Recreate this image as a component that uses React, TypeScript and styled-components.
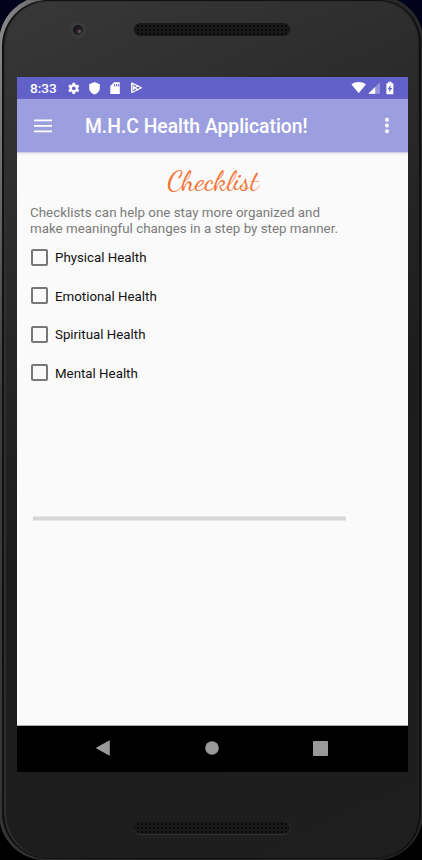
import React from "react";
import styled, { createGlobalStyle } from "styled-components";

const GlobalStyle = createGlobalStyle`
  * { box-sizing: border-box; }
  body { margin: 0; background: #000; font-family: Roboto, sans-serif; }
`;

const Scene = styled.div`
  width: 422px;
  height: 860px;
  overflow: hidden;
  display: flex;
  background: linear-gradient(#02031c 0, #01020f 60px, #000 400px);
`;

const Rim = styled.div`
  flex: none;
  width: 424px;
  height: 864px;
  margin: -4px -1px 0;
  padding: 4px 2px 1px 3px;
  border-radius: 47px 44px 47px 46px;
  background: linear-gradient(
    100deg,
    #929292 0,
    #777 24px,
    #3c3c3c 70px,
    #262626 300px,
    #2a2a2a 100%
  );
`;

const Body = styled.div`
  height: 859px;
  display: flex;
  flex-direction: column;
  align-items: center;
  border: 2px solid #101010;
  border-top-width: 1px;
  border-bottom-width: 1px;
  border-radius: 46px 42px 45px 46px;
  background: linear-gradient(155deg, #383838 0, #303030 140px, #232323 370px, #1c1c1c 510px, #1e1e1f 100%);
  box-shadow: inset 2px 0 1px #303030, inset -1px 0 1px #242424;
`;

const Forehead = styled.div`
  width: 391px;
  height: 76px;
  flex: none;
  margin-left: 2px;
  display: grid;
  grid-template-columns: 117px 156px 1fr;
  align-items: start;
`;

const Camera = styled.div`
  width: 16px;
  height: 16px;
  margin: 21px 0 0 53px;
  border-radius: 50%;
  border: 3px solid #3b3b3b;
  background: radial-gradient(circle at 65% 65%, #654b56 0 1px, #29252d 2px, #171719 5px);
`;

const Speaker = styled.div<{ $top: number }>`
  width: 156px;
  height: 13px;
  margin-top: ${(p) => p.$top}px;
  border-radius: 7px;
  background: radial-gradient(circle, #0a0a0a 0 0.8px, transparent 1.3px) 2px 1px / 4px 4px, #191919;
  box-shadow: 0 1px 0 #303030, 1px 0 0 #2c2c2c;
`;

const Screen = styled.main`
  width: 391px;
  height: 695px;
  flex: none;
  margin-left: 2px;
  overflow: hidden;
  display: flex;
  flex-direction: column;
  background: #fafafa;
`;

const StatusBar = styled.div`
  height: 22px;
  flex: none;
  display: flex;
  align-items: center;
  justify-content: space-between;
  padding: 0 13px;
  color: #fff;
  background: #6260c9;
`;

const StatusGroup = styled.div`
  display: flex;
  align-items: center;
  svg { display: block; }
`;

const Clock = styled.span`
  width: 36px;
  font-size: 13.6px;
  font-weight: 500;
  line-height: 22px;
`;

const AppBar = styled.header`
  height: 53px;
  flex: none;
  display: flex;
  align-items: center;
  padding: 0 17px;
  color: #fff;
  background: #9c9fdf;
  box-shadow: 0 1px 1px #d1d1df, 0 2px 3px #e8e8ec;
`;

const IconButton = styled.button`
  display: block;
  padding: 0;
  border: 0;
  color: #fff;
  background: none;
  svg { display: block; }
`;

const AppTitle = styled.h1`
  flex: 1;
  margin: 2px 0 0 33px;
  font-size: 19.3px;
  font-weight: 500;
  line-height: 24px;
  white-space: nowrap;
`;

const Content = styled.section`
  flex: 1;
  display: flex;
  flex-direction: column;
  align-items: flex-start;
  padding-left: 13px;
`;

const Heading = styled.h2`
  align-self: center;
  margin: 10px 0 0 -12px;
  height: 37px;
  color: #f47436;
  font-family: "Dancing Script", cursive;
  font-size: 28.8px;
  font-weight: 400;
  line-height: 39px;
`;

const Description = styled.p`
  margin: 6px 0 0;
  color: #7b7b7b;
  font-size: 13.36px;
  line-height: 16px;
  white-space: nowrap;
`;

const Options = styled.div`
  display: grid;
  grid-auto-rows: 38.5px;
  margin-top: 1px;
`;

const Option = styled.label`
  display: flex;
  align-items: center;
  gap: 7px;
  padding-left: 1px;
  color: #111;
  font-size: 13.3px;
  line-height: 18px;
`;

const OptionText = styled.span`
  padding-top: 2px;
`;

const Checkbox = styled.input`
  appearance: none;
  width: 17px;
  height: 17px;
  margin: 0;
  border: 2px solid #777;
  border-radius: 2px;
`;

const Progress = styled.div`
  width: 313px;
  height: 5px;
  margin: 124px 0 0 3px;
  border: solid #e8e8e8;
  border-width: 1px 0;
  background: #d6d6d6;
`;

const NavBar = styled.nav`
  height: 47px;
  flex: none;
  display: grid;
  grid-template-columns: 169px 49px 168px;
  align-items: center;
  justify-items: center;
  padding: 0 0 2px 1px;
  border-top: 1px solid #aaa;
  background: #000;
  svg { display: block; }
`;

const options = ["Physical Health", "Emotional Health", "Spiritual Health", "Mental Health"];

const StatusIcons = () => (
  <svg width="78" height="16" viewBox="0 0 78 16" fill="#fff">
    <g transform="translate(-.9 .3) scale(.67)">
      <path d="M19.14 12.94c.04-.3.06-.61.06-.94s-.02-.64-.07-.94l2.03-1.58-1.92-3.32-2.39.96a7 7 0 0 0-1.62-.94L14.87 3.6h-3.84l-.36 2.58c-.59.24-1.13.57-1.62.94l-2.39-.96-1.92 3.32 2.03 1.58a7.5 7.5 0 0 0 0 1.88l-2.03 1.58 1.92 3.32 2.39-.96c.5.38 1.03.7 1.62.94l.36 2.58h3.84l.36-2.58c.59-.24 1.13-.56 1.62-.94l2.39.96 1.92-3.32zM12.95 14.8a2.8 2.8 0 1 1 0-5.6 2.8 2.8 0 0 1 0 5.6z" />
    </g>
    <path d="M28.5 2.1 33.8 4.3v4c0 3-2 5-5.3 6.3-3.3-1.3-5.3-3.3-5.3-6.3v-4z" />
    <path fillRule="evenodd" d="M48 2.3h5.8v11.8h-9.5V6zm.1 1.7v2.5h1V4zm2 0v2.5h1V4zm2 0v2.5h1V4z" />
    <g transform="translate(0 1)">
      <path d="M65 1.4 69.6 6.8 65 12.2z" />
      <path
        d="M65.6 1.9 75.4 6.8l-9.8 4.9M69.2 6.8l3.1-2.4M69.2 6.8l3.1 2.4"
        fill="none"
        stroke="#fff"
        strokeWidth="1.2"
        strokeLinejoin="round"
      />
      <path d="M66.5 4v5.6" stroke="#8e8cd9" strokeWidth=".7" />
    </g>
  </svg>
);

const SignalIcons = () => (
  <svg width="44" height="16" viewBox="0 0 44 16" fill="#fff">
    <path d="M.5 4.4C4.7 1.2 10.6 1.2 14.8 4.4L7.7 13.2z" />
    <path d="M28.9 2.3v11.5H17.3z" opacity=".35" />
    <path d="M24.2 7v6.8h-6.9z" />
    <path fillRule="evenodd" d="M37.2 1.8h3.4v1.4h1.8v11h-7V3.2h1.8zM39.6 5.1l-3 4.1h1.9l-.3 3.1 3-4.2h-1.9z" />
  </svg>
);

export default function App() {
  return (
    <>
      <GlobalStyle />
      <Scene>
        <Rim>
          <Body>
            <Forehead>
              <Camera />
              <Speaker $top={22} />
            </Forehead>
            <Screen>
              <StatusBar>
                <StatusGroup>
                  <Clock>8:33</Clock>
                  <StatusIcons />
                </StatusGroup>
                <StatusGroup>
                  <SignalIcons />
                </StatusGroup>
              </StatusBar>
              <AppBar>
                <IconButton aria-label="Open menu">
                  <svg width="18" height="14" viewBox="0 0 18 14" fill="currentColor">
                    <path d="M0 .5h18v1.7H0zM0 6h18v1.7H0zM0 11.5h18v1.7H0z" />
                  </svg>
                </IconButton>
                <AppTitle>M.H.C Health Application!</AppTitle>
                <IconButton aria-label="More options">
                  <svg width="8" height="17" viewBox="0 0 8 17" fill="currentColor">
                    <circle cx="4" cy="2.7" r="2" />
                    <circle cx="4" cy="8.5" r="2" />
                    <circle cx="4" cy="14.3" r="2" />
                  </svg>
                </IconButton>
              </AppBar>
              <Content>
                <Heading>Checklist</Heading>
                <Description>
                  Checklists can help one stay more organized and
                  <br />
                  make meaningful changes in a step by step manner.
                </Description>
                <Options>
                  {options.map((name) => (
                    <Option key={name}>
                      <Checkbox type="checkbox" />
                      <OptionText>{name}</OptionText>
                    </Option>
                  ))}
                </Options>
                <Progress />
              </Content>
              <NavBar>
                <svg width="14" height="16" viewBox="0 0 14 16" fill="#999">
                  <path d="M13.8.8v14.4c0 .4-.4.4-.7.2L.5 8.6a.7.7 0 0 1 0-1.2L13.1.6c.3-.2.7-.2.7.2z" />
                </svg>
                <svg width="14" height="14" viewBox="0 0 14 14" fill="#999">
                  <circle cx="7" cy="7" r="6.8" />
                </svg>
                <svg width="15" height="15" viewBox="0 0 15 15" fill="#999">
                  <rect width="15" height="15" rx="1" />
                </svg>
              </NavBar>
            </Screen>
            <Speaker $top={49} />
          </Body>
        </Rim>
      </Scene>
    </>
  );
}
